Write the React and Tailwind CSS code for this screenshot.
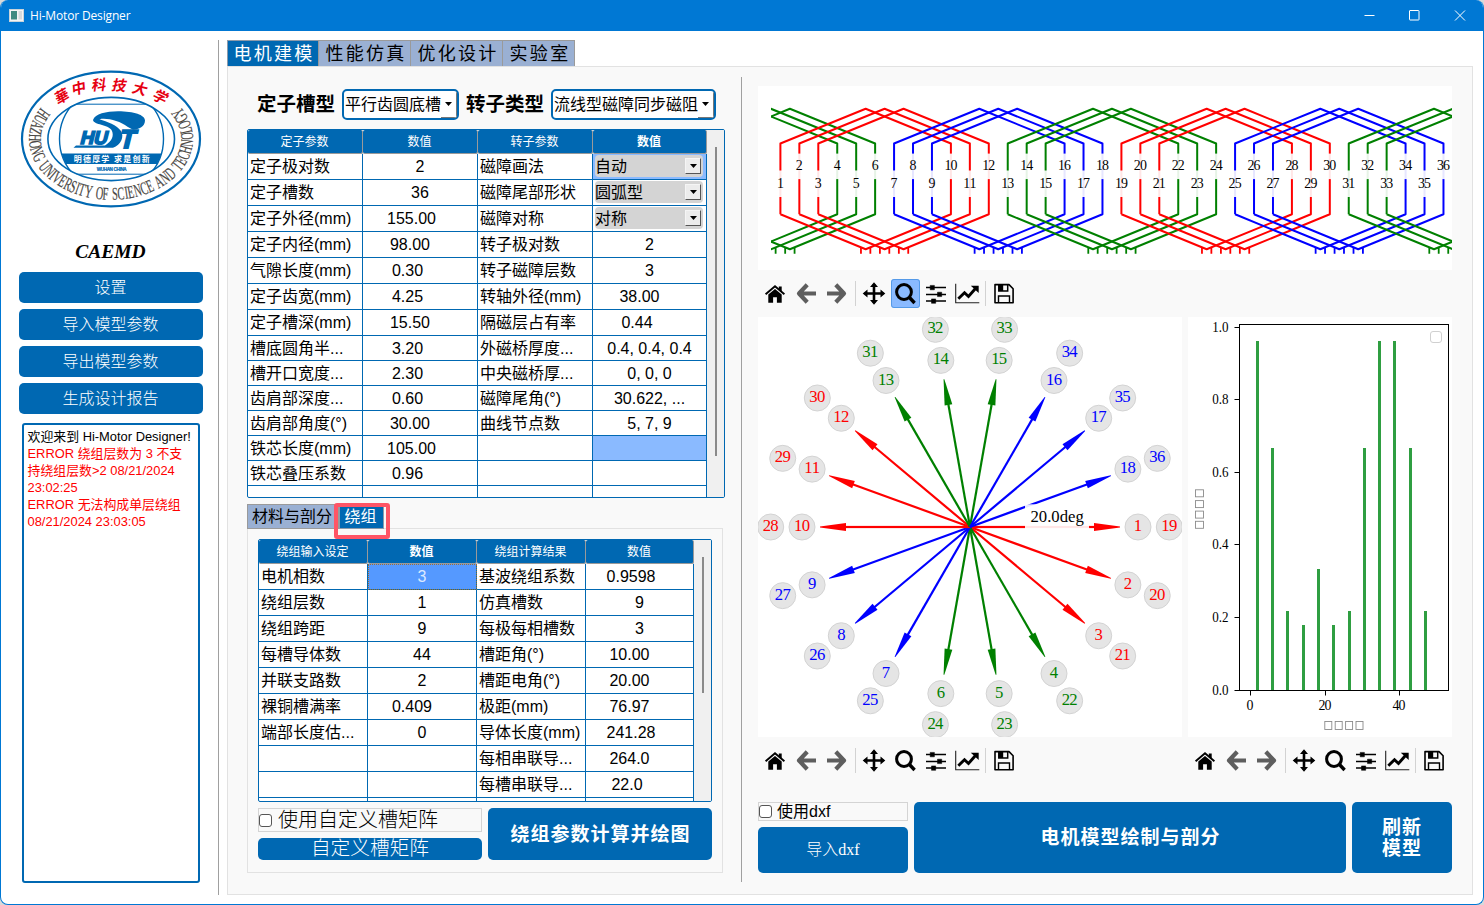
import React from "react";

const SANS = "font-['Liberation_Sans','Noto_Sans_CJK_SC',sans-serif]";
const SERIF = "font-['Liberation_Serif','Noto_Sans_CJK_SC',serif]";

/* ---------- Emblem ---------- */

const NARROW = { I: 0.5, " ": 0.55, J: 0.6, F: 0.85, L: 0.85, E: 0.9, S: 0.8, U: 1.05, N: 1.08, O: 1.05, G: 1.08, A: 1.02, H: 1.08, D: 1.05 };

function ringLetters() {
  const text = "HUAZHONG UNIVERSITY OF SCIENCE AND TECHNOLOGY";
  const cx = 111, cy = 138.5, rx = 82, ry = 60.8;
  const pts = [];
  let total = 0;
  let prev = null;
  for (let i = 0; i <= 600; i++) {
    const t = ((212 - (244 * i) / 600) * Math.PI) / 180;
    const x = cx + rx * Math.cos(t);
    const y = cy + ry * Math.sin(t);
    if (prev) total += Math.hypot(x - prev.x, y - prev.y);
    const p = { x, y, s: total, a: (Math.atan2(-ry * Math.cos(t), rx * Math.sin(t)) * 180) / Math.PI };
    pts.push(p);
    prev = p;
  }
  const ws = [...text].map((c) => NARROW[c] || 1);
  const sum = ws.reduce((a, b) => a + b, 0);
  let acc = 0;
  return [...text].map((c, i) => {
    const s = ((acc + ws[i] / 2) / sum) * total;
    acc += ws[i];
    const p = pts.find((q) => q.s >= s) || pts[pts.length - 1];
    return { c, x: p.x, y: p.y, a: p.a };
  });
}

function Emblem() {
  const top = [
    ["華", 62, 96, -30], ["中", 79, 88, -14], ["科", 99, 84.5, -3],
    ["技", 119.5, 85, 4], ["大", 140, 88.5, 14], ["学", 160.5, 96.5, 26],
  ];
  return (
    <svg className="block h-[138px] w-[182px]" viewBox="20 69.5 182 138">
      <defs>
        <clipPath id="em-oval"><ellipse cx="111" cy="138.5" rx="64" ry="42" /></clipPath>
        <clipPath id="em-round"><circle cx="111.5" cy="138.5" r="52" /></clipPath>
      </defs>
      <ellipse cx="111" cy="138.5" rx="89" ry="67.3" fill="#fff" stroke="#0068b2" strokeWidth="2.2" />
      <ellipse cx="111.2" cy="138.5" rx="63.3" ry="41.6" fill="none" stroke="#0068b2" strokeWidth="1.6" />
      <g clipPath="url(#em-oval)">
        <circle cx="111.5" cy="138.5" r="52" fill="none" stroke="#0068b2" strokeWidth="1.4" />
        <g clipPath="url(#em-round)">
          <path d="M50 103.7H170M50 173.7H170" stroke="#0068b2" strokeWidth="1" />
          <rect x="50" y="153" width="120" height="10.5" fill="#0068b2" />
        </g>
      </g>
      <g fill="#e60012" fontSize="14.5" fontWeight="700" textAnchor="middle" className={SERIF}>
        {top.map(([c, x, y, r]) => (
          <text key={c} x="0" y="5" transform={`translate(${x} ${y}) rotate(${r}) skewX(-10)`}>{c}</text>
        ))}
      </g>
      <g fill="#4a4744" fontSize="18" textAnchor="middle" stroke="#4a4744" strokeWidth="0.2" className={SERIF}>
        {ringLetters().map((l, i) => (
          <text key={i} transform={`translate(${l.x} ${l.y}) rotate(${l.a}) scale(0.57 1)`}>{l.c}</text>
        ))}
      </g>
      <g fill="#0068b2">
        <path d="M93 119.500C95 113.500 106 110.800 118 110.800C134 110.800 145 114.500 145 120C145 126 139 129 133 129.300L127.500 126.200C120 120.500 107 117 99.500 118.700C107 121 117 124.500 121 130.500C124.500 136 121 144.500 113 147.300L73.500 147.300L76 144.900L105 144.900C112 141 114.500 135 111.500 129.500C108 124 94 124.500 93 119.500Z" />
        <text x="0" y="0" transform="translate(79.500 143.500) skewX(-14) scale(1.020 1)" fontSize="18.500" fontWeight="700" stroke="#0068b2" strokeWidth="1.600" className={SANS}>HU</text>
        <text x="0" y="0" transform="translate(118 147) skewX(-14) scale(1 1)" fontSize="26" fontWeight="700" stroke="#0068b2" strokeWidth="1.800" className={SANS}>T</text>
      </g>
      <text x="111.700" y="161.200" fontSize="8" fontWeight="700" fill="#fff" textAnchor="middle" textLength="76" className={SANS}>明德厚学 求是创新</text>
      <text x="111.700" y="170" fontSize="4.600" fontWeight="700" fill="#0068b2" stroke="#0068b2" strokeWidth="0.200" textAnchor="middle" textLength="30" className={SANS}>WUHAN CHINA</text>
    </svg>
  );
}

/* ---------- Plot toolbar ---------- */

function Tool({ active, children }) {
  return (
    <div className={active ? "h-[29px] w-[30px] pl-px" : "h-[29px] w-[30px]"}>
      <div className={active ? "h-[29px] w-[29px] rounded-[3px] bg-[#8abaff] outline outline-1 -outline-offset-1 outline-[#559ae8]" : "h-[29px] w-[30px]"}>
        <svg className={active ? "-ml-px block h-[29px] w-[30px]" : "block h-[29px] w-[30px]"} viewBox="0 0 30 29">{children}</svg>
      </div>
    </div>
  );
}

const Sep = () => <div className="mx-[2px] h-[25px] w-px bg-[#d2d2d2]" />;

function Toolbar({ zoomOn }) {
  return (
    <div className="flex h-[31px] items-center gap-px pl-[2px]">
      <Tool>
        <path d="M8.3 15.5L15 10L21.7 15.5V23.8H16.9V18.2H13.1V23.8H8.3Z" />
        <path d="M5.6 15.2L15 7.3L24.4 15.2" fill="none" stroke="#000" strokeWidth="1.9" />
        <path d="M18.8 7.4H21.7V13L18.8 10.6Z" />
      </Tool>
      <Tool>
        <path d="M16.2 5.8L8 14.5L16.2 23.2M8.5 14.5H25" fill="none" stroke="#5e5e5e" strokeWidth="4.2" strokeLinejoin="round" />
      </Tool>
      <Tool>
        <path d="M13.8 5.8L22 14.5L13.8 23.2M21.5 14.5H5" fill="none" stroke="#5e5e5e" strokeWidth="4.2" strokeLinejoin="round" />
      </Tool>
      <Sep />
      <Tool>
        <path d="M15 5V24M5.5 14.5H24.5" stroke="#000" strokeWidth="2.6" />
        <path d="M15 3.2L19 8H11ZM15 25.8L19 21H11ZM3.7 14.5L8.5 10.5V18.5ZM26.3 14.5L21.5 10.5V18.5Z" />
      </Tool>
      <Tool active={zoomOn}>
        <circle cx="14" cy="13" r="7.4" fill="none" stroke="#000" strokeWidth="3" />
        <path d="M19 18L24.6 24" stroke="#000" strokeWidth="3.4" />
      </Tool>
      <Tool>
        <path d="M5 8.6H25M5 15.4H25M5 22.1H25" stroke="#000" strokeWidth="1.5" />
        <path d="M9.2 6.4H13.4V10.8H9.2ZM16.5 13.2H20.7V17.6H16.5ZM10.5 19.9H14.7V24.3H10.5Z" stroke="#000" strokeWidth="0.5" />
      </Tool>
      <Tool>
        <path d="M3.7 4.8V23.8H27.3" fill="none" stroke="#222" strokeWidth="1.1" />
        <path d="M6.3 19.7L12.5 13.7L16.5 17.5L23.5 9.5" fill="none" stroke="#000" strokeWidth="2.9" />
        <path d="M18.8 6.8H26.7V14Z" />
      </Tool>
      <Sep />
      <Tool>
        <path d="M6 5.6H20L24.1 9.7V23.7H6Z" fill="none" stroke="#000" strokeWidth="1.6" strokeLinejoin="round" />
        <path d="M9.8 5.6V12.1H18.7V5.6" fill="none" stroke="#000" strokeWidth="1.5" />
        <path d="M9.8 5H14.2V12H9.8Z" />
        <path d="M9.5 23.5V17H20.5V23.5" fill="none" stroke="#000" strokeWidth="1.4" />
      </Tool>
    </div>
  );
}

/* ---------- Plots ---------- */

const R = "#ff0000", G = "#008000", B = "#0000ff";
const phaseColor = (k) => [R, G, B, R, G, B][Math.floor(((k - 1) % 18) / 3)];

function WindingPlot() {
  const sx = (k) => 780.4 + (k - 1) * 18.945;
  const coils = [];
  [[-5, G], [1, R], [7, B], [13, G], [19, R], [25, B], [31, G]].forEach(([s, c]) => {
    for (let i = 0; i < 3; i++) coils.push([s + i, c]);
  });
  return (
    <svg className="block h-[184px] w-[694px] bg-white" viewBox="758 86 694 184">
      <defs><clipPath id="wind"><rect x="771" y="86" width="681" height="184" /></clipPath></defs>
      <g clipPath="url(#wind)" fill="none" strokeWidth="2">
        {coils.map(([s, c]) => {
          const a = sx(s), b = sx(s + 9), m = (a + b) / 2;
          return (
            <g key={s} stroke={c}>
              <path d={`M${a} 214.300V143.500L${m} 108.800L${b} 143.500V214.300L${m} 249.300L${a} 214.300`} strokeLinejoin="round" />
              <path d={`M${m - 4.7} 247.500V253.800M${m + 4.7} 247.500V253.800`} strokeWidth="1.8" />
            </g>
          );
        })}
      </g>
      <g fontSize="13.9" textAnchor="middle" className={SERIF}>
        {Array.from({ length: 36 }, (_, i) => {
          const k = i + 1, odd = k % 2 === 1;
          return (
            <g key={k}>
              <rect x={sx(k) - 6} y={odd ? 170.5 : 153.6} width="12" height={odd ? 26.5 : 25.5} fill="#fff" fillOpacity="0.9" />
              <text x={sx(k)} y={odd ? 188 : 170} textLength={k > 9 ? 13 : undefined}>{k}</text>
            </g>
          );
        })}
      </g>
    </svg>
  );
}

function StarPlot() {
  const cx = 970, cy = 527;
  const at = (k, r) => {
    const t = ((k - 1) * 20 * Math.PI) / 180;
    return [cx + r * Math.cos(t), cy + r * 1.007 * Math.sin(t)];
  };
  const slots = Array.from({ length: 36 }, (_, i) => i + 1);
  return (
    <svg className="block h-[420px] w-[424px] bg-white" viewBox="758 317 424 420">
      {slots.slice(0, 18).map((k) => (
        <g key={k} transform={`translate(${cx} ${cy}) rotate(${(k - 1) * 20})`} fill={phaseColor(k)}>
          <rect x="0" y="-1.1" width="128" height="2.2" />
          <path d="M124 -3.9V3.9L150 0.4V-0.4Z" />
        </g>
      ))}
      <rect x="1025" y="504.3" width="64" height="26" fill="#fff" fillOpacity="0.9" />
      <g fontSize="16.7" className={SERIF}>
        <text x="1030.5" y="521.7">20.0deg</text>
        {slots.map((k) => {
          const [x, y] = at(k, k > 18 ? 199.3 : 168);
          return (
            <g key={k}>
              <circle cx={x} cy={y} r="13" fill="#e5e5e5" stroke="#d3d3d3" strokeWidth="1" />
              <text x={x} y={y + 4.1} textAnchor="middle" fill={phaseColor(k)} textLength={k > 9 ? 16 : undefined}>{k}</text>
            </g>
          );
        })}
      </g>
    </svg>
  );
}

const BARS = [
  [1256, 341], [1271, 448], [1286, 611], [1302, 625], [1317, 569], [1332, 625],
  [1348, 611], [1363, 448], [1378, 341], [1393, 341], [1409, 448], [1424, 611],
];

function BarPlot() {
  return (
    <svg className="block h-[420px] w-[264px] bg-white" viewBox="1188 317 264 420">
      {BARS.map(([x, y]) => <rect key={x} x={x} y={y} width="3" height={690 - y} fill="#2f9e41" />)}
      <rect x="1239.5" y="324.5" width="209" height="366" fill="none" stroke="#000" />
      <g fontSize="13.9" className={SERIF}>
        {[["1.0", 327.5], ["0.8", 399.5], ["0.6", 472.5], ["0.4", 544.5], ["0.2", 617.5], ["0.0", 690.5]].map(([t, y]) => (
          <g key={t}>
            <path d={`M1234.500 ${y}H1240`} stroke="#000" />
            <text x="1228.5" y={y + 4.3} textAnchor="end" textLength="16.3" lengthAdjust="spacingAndGlyphs">{t}</text>
          </g>
        ))}
        {[["0", 1250.5], ["20", 1325.5], ["40", 1399.5]].map(([t, x]) => (
          <g key={t}>
            <path d={`M${x} 690V695.500`} stroke="#000" />
            <text x={x - 0.5} y="710" textAnchor="middle" textLength={t.length > 1 ? 13 : undefined}>{t}</text>
          </g>
        ))}
      </g>
      <rect x="1430.5" y="331.5" width="11" height="11" rx="2.5" fill="#fff" stroke="#d0d0d0" />
      <g fill="none" strokeWidth="0.9" stroke="#8a8a8a">
        {[489.8, 500.6, 511.1, 521.3].map((y) => <rect key={y} x="1195.5" y={y} width="8" height="7" />)}
        {[1324.8, 1335.2, 1345.6, 1356].map((x) => <rect key={x} x={x} y="721.5" width="7" height="8" />)}
      </g>
    </svg>
  );
}

/* ---------- Tables ---------- */

const trailing = { 4: "pr-[25px]", 5: "pr-[20px]", 6: "pr-[17px]" };

function valueClass(v) {
  if (/^\d+\.\d+$/.test(v)) return trailing[v.length] || "";
  return "";
}

function Head({ cols, bold }) {
  return cols.map((c, i) => (
    <div
      key={i}
      className={`flex h-6 items-center justify-center rounded-[2px] border-r border-b border-[#9a9a9a] bg-[#0068b2] pt-px pr-px text-[12px] leading-none text-white ${i === bold ? "font-bold" : "font-normal"}`}
    >
      {c}
    </div>
  ));
}

function CellCombo({ text, selected }) {
  return (
    <div className={`h-full w-full py-px pr-[3px] pl-[2px] ${selected ? "bg-[#8abaff]" : ""}`}>
      <div className="flex h-[22px] items-center justify-between rounded-[4px] bg-[#d4d4d4] pr-[2px]">
        <span>{text}</span>
        <span className="flex h-4 w-4 items-center justify-center border border-t-[#f5f5f5] border-r-[#555] border-b-[#555] border-l-[#f5f5f5] bg-[#ececec]">
          <svg className="h-[4px] w-[7px]" viewBox="0 0 7 4"><path d="M0 0H7L3.5 4Z" /></svg>
        </span>
      </div>
    </div>
  );
}

function Cell({ children, kind, short }) {
  const h = short ? "h-[25px]" : "h-[26px]";
  const base = `${h} overflow-hidden whitespace-nowrap border-r border-b border-[#0068b2] text-[16px] leading-[25px]`;
  if (kind === "label") return <div className={`${base} pl-[2px]`}>{children}</div>;
  if (kind === "combo") return <div className={base}>{children}</div>;
  if (kind === "marked") return <div className={`${base} bg-[#8abaff]`} />;
  if (kind === "current")
    return <div className={`${base} bg-[#5599ff] text-center text-[#dbe9ff] outline outline-1 -outline-offset-1 outline-dotted outline-[#a07030]`}>{children}</div>;
  return <div className={`${base} text-center ${valueClass(String(children || ""))}`}>{children}</div>;
}

const T1 = [
  ["定子极对数", "2", "磁障画法", { combo: "自动", selected: true }],
  ["定子槽数", "36", "磁障尾部形状", { combo: "圆弧型" }],
  ["定子外径(mm)", "155.00", "磁障对称", { combo: "对称" }],
  ["定子内径(mm)", "98.00", "转子极对数", "2"],
  ["气隙长度(mm)", "0.30", "转子磁障层数", "3"],
  ["定子齿宽(mm)", "4.25", "转轴外径(mm)", "38.00"],
  ["定子槽深(mm)", "15.50", "隔磁层占有率", "0.44"],
  ["槽底圆角半...", "3.20", "外磁桥厚度...", "0.4, 0.4, 0.4"],
  ["槽开口宽度...", "2.30", "中央磁桥厚...", "0, 0, 0"],
  ["齿肩部深度...", "0.60", "磁障尾角(°)", "30.622, ..."],
  ["齿肩部角度(°)", "30.00", "曲线节点数", "5, 7, 9"],
  ["铁芯长度(mm)", "105.00", "", { marked: true }],
  ["铁芯叠压系数", "0.96", "", ""],
];

const T2 = [
  ["电机相数", { current: "3" }, "基波绕组系数", "0.9598"],
  ["绕组层数", "1", "仿真槽数", "9"],
  ["绕组跨距", "9", "每极每相槽数", "3"],
  ["每槽导体数", "44", "槽距角(°)", "10.00"],
  ["并联支路数", "2", "槽距电角(°)", "20.00"],
  ["裸铜槽满率", "0.409", "极距(mm)", "76.97"],
  ["端部长度估...", "0", "导体长度(mm)", "241.28"],
  ["", "", "每相串联导...", "264.0"],
  ["", "", "每槽串联导...", "22.0"],
];

function Rows({ data, shortFrom }) {
  return data.map((row, r) =>
    row.map((v, c) => {
      const key = `${r}-${c}`;
      const short = r >= shortFrom;
      if (c % 2 === 0) return <Cell key={key} kind="label" short={short}>{v}</Cell>;
      if (v && v.combo) return <Cell key={key} kind="combo" short={short}><CellCombo text={v.combo} selected={v.selected} /></Cell>;
      if (v && v.marked) return <Cell key={key} kind="marked" short={short} />;
      if (v && v.current) return <Cell key={key} kind="current" short={short}>{v.current}</Cell>;
      return <Cell key={key} short={short}>{v}</Cell>;
    })
  );
}

function Tail() {
  return [0, 1, 2, 3].map((i) => <div key={i} className="border-r border-[#0068b2]" />);
}

/* ---------- Controls ---------- */

function Combo({ text, className }) {
  return (
    <div className={`flex h-[31px] items-center justify-between overflow-hidden rounded-[5px] border-2 border-[#0068b2] bg-white pl-px ${className}`}>
      <span className="w-0 flex-1 text-[16px] leading-none font-normal whitespace-nowrap">{text}</span>
      <span className="flex h-[27px] w-4 shrink-0 items-center justify-center border-r border-b border-[#777]">
        <svg className="h-[4px] w-[7px]" viewBox="0 0 7 4"><path d="M0 0H7L3.5 4Z" /></svg>
      </span>
    </div>
  );
}

function Tab({ on, className, children }) {
  return (
    <div className={`flex items-center justify-center border whitespace-nowrap ${on ? "border-[#8d9bab] bg-[#0068b2] text-white" : "border-[#9a9a9a] bg-[#9ab0d3] text-black"} ${className}`}>
      {children}
    </div>
  );
}

function Button({ className, children }) {
  return <div className={`flex items-center justify-center rounded-[5px] bg-[#0068b2] text-center whitespace-nowrap text-white ${className}`}>{children}</div>;
}

const Check = () => <span className="h-[13px] w-[13px] shrink-0 rounded-[3px] border border-[#555] bg-white" />;

/* ---------- Window ---------- */

export default function App() {
  return (
    <div className="h-[905px] w-[1484px] overflow-hidden bg-[#d9d9d9]">
      <div className={`flex h-[905px] w-[1484px] flex-col overflow-hidden rounded-[8px] border border-t-0 border-[#0078d4] bg-white text-black ${SANS}`}>
        <div className="flex h-[31px] shrink-0 items-center bg-[#0078d4] pl-2 text-white">
          <svg className="h-[13px] w-[15px]" viewBox="0 0 15 13">
            <rect x="0.5" y="0.5" width="14" height="12" fill="#f4f4f4" stroke="#c9d3da" />
            <rect x="2" y="2" width="6" height="8.5" fill="#3f8a80" />
            <rect x="9.5" y="2" width="3.5" height="8.5" fill="#d5d9dc" />
          </svg>
          <span className="ml-[6px] flex-1 font-['Open_Sans','Noto_Sans',sans-serif] text-[12px] leading-none tracking-[-0.15px]">Hi-Motor Designer</span>
          <svg className="mr-[17px] h-[11px] w-[102px]" viewBox="0 0 102 11" fill="none" stroke="#fff">
            <path d="M0.5 5.5H10.5" />
            <rect x="45.5" y="0.5" width="9.5" height="9.5" rx="0.5" />
            <path d="M91 0.500L101 10.500M101 0.500L91 10.500" strokeWidth="1" />
          </svg>
        </div>

        <div className="flex min-h-0 flex-1">
          {/* Side bar */}
          <div className="flex w-[217px] shrink-0 flex-col items-center pt-[38.5px] pl-[2px]">
            <div className="flex w-[184px] flex-col items-center"><Emblem /></div>
            <div className={`mt-[29px] flex h-[30px] items-center text-[19.5px] leading-none font-bold italic ${SERIF}`}>CAEMD</div>
            <div className="mt-[5.5px] flex w-[184px] flex-col gap-[6px]">
              {["设置", "导入模型参数", "导出模型参数", "生成设计报告"].map((t) => (
                <Button key={t} className="h-[31px] text-[16px] leading-none font-light">{t}</Button>
              ))}
            </div>
            <div className="mt-[9px] h-[460px] w-[178px] rounded-[3px] border-2 border-[#0068b2] px-1 pt-[3px] text-[12.9px] leading-[17px] whitespace-nowrap text-[#ff0000]">
              <p className="text-black">欢迎来到 Hi-Motor Designer!</p>
              <p>ERROR 绕组层数为 3 不支</p>
              <p>持绕组层数&gt;2 08/21/2024</p>
              <p>23:02:25</p>
              <p>ERROR 无法构成单层绕组</p>
              <p>08/21/2024 23:03:05</p>
            </div>
          </div>
          <div className="mt-[9px] h-[855px] w-px shrink-0 bg-[#a0a0a0]" />

          {/* Main area */}
          <div className="ml-2 flex w-[1246px] shrink-0 flex-col pt-[9px]">
            <div className="flex h-[26px]">
              {[["电机建模", "w-[92px] pl-[2px]"], ["性能仿真", "w-[93px] -ml-px pl-[3px]"], ["优化设计", "w-[93px] -ml-px pl-[3px]"], ["实验室", "w-[73px] -ml-px pl-[3px]"]].map(([t, w], i) => (
                <Tab key={t} on={i === 0} className={`h-[27px] text-[18px] leading-none font-normal tracking-[2.3px] ${w}`}>{t}</Tab>
              ))}
            </div>
            <div className="flex h-[829px] border border-[#e2e2e2] bg-[#f9f9f9] pl-[19px]">
              {/* Parameters */}
              <div className="flex w-[478px] shrink-0 flex-col pt-[22px]">
                <div className="flex h-[31px] items-center pl-[10px] text-[19.5px] font-bold">
                  <span className="w-[85px] leading-none">定子槽型</span>
                  <Combo text="平行齿圆底槽" className="w-[117px]" />
                  <span className="ml-[7px] w-[85px] leading-none">转子类型</span>
                  <Combo text="流线型磁障同步磁阻" className="w-[165px]" />
                </div>

                <div className="mt-[9px] flex h-[369px] w-[478px] overflow-hidden rounded-[2px] border border-[#0068b2] bg-white">
                  <div className="grid w-[459px] grid-cols-[115px_115px_115px_114px] grid-rows-[24px_repeat(7,26px)_repeat(6,25px)_11px]">
                    <Head cols={["定子参数", "数值", "转子参数", "数值"]} bold={3} />
                    <Rows data={T1} shortFrom={7} />
                    <Tail />
                  </div>
                  <div className="w-[17px] bg-[#f0f0f0] pt-[17px] pl-2"><div className="h-[309px] w-[2px] bg-[#8a8a8a]" /></div>
                </div>

                <div className="relative mt-[6px] flex h-[24px] w-[476px]">
                  <Tab className="h-[25px] w-[92px] pr-[2px] text-[16px] leading-none">材料与剖分</Tab>
                  <Tab on className="h-[25px] w-[45px] pr-[2px] text-[16px] leading-none">绕组</Tab>
                  <div className="absolute -top-px left-[87px] z-10 h-[36px] w-[56px] rounded-[3px] border-4 border-[#ff5566]" />
                </div>
                <div className="h-[345px] w-[476px] border border-[#e2e2e2] p-[10px]">
                  <div className="flex h-[263px] w-[454px] overflow-hidden rounded-[2px] border border-[#0068b2] bg-white">
                    <div className="grid w-[435px] grid-cols-[109px_109px_109px_108px] grid-rows-[24px_repeat(9,26px)_3px]">
                      <Head cols={["绕组输入设定", "数值", "绕组计算结果", "数值"]} bold={1} />
                      <Rows data={T2} shortFrom={99} />
                      <Tail />
                    </div>
                    <div className="w-[17px] bg-[#f0f0f0] pt-[17px] pl-2"><div className="h-[136px] w-[2px] bg-[#8a8a8a]" /></div>
                  </div>
                  <div className="mt-[6px] flex gap-[6px]">
                    <div className="flex w-[224px] flex-col gap-[6px]">
                      <div className="flex h-6 items-center gap-[6px] border border-[#d4d4d4] text-[20px] leading-none font-light"><Check />使用自定义槽矩阵</div>
                      <Button className="h-[22px] text-[19.7px] leading-none font-light">自定义槽矩阵</Button>
                    </div>
                    <Button className="h-[52px] w-[224px] pl-px text-[19px] leading-none font-bold tracking-[1px]">绕组参数计算并绘图</Button>
                  </div>
                </div>
              </div>

              <div className="mt-[10px] ml-4 h-[805px] w-px shrink-0 bg-[#a0a0a0]" />

              {/* Plots */}
              <div className="ml-4 flex w-[694px] shrink-0 flex-col pt-[19px]">
                <WindingPlot />
                <div className="my-2"><Toolbar zoomOn /></div>
                <div className="flex gap-[6px]">
                  <div className="flex flex-col gap-2"><StarPlot /><Toolbar /></div>
                  <div className="flex flex-col gap-2"><BarPlot /><Toolbar /></div>
                </div>
                <div className="mt-[26px] flex h-[71px] gap-[6px]">
                  <div className="flex w-[150px] flex-col gap-[6px]">
                    <div className="flex h-[19px] items-center gap-[5px] border border-[#d4d4d4] text-[16px] leading-none"><Check /><span>使用dxf</span></div>
                    <Button className={`h-[46px] text-[16px] leading-none font-light ${SERIF}`}>导入dxf</Button>
                  </div>
                  <Button className="w-[432px] pl-px text-[19px] leading-none font-bold tracking-[1px]">电机模型绘制与剖分</Button>
                  <Button className="w-[100px] text-[19px] leading-[21px] font-bold tracking-[1px]">刷新<br />模型</Button>
                </div>
              </div>
            </div>
          </div>
        </div>
      </div>
    </div>
  );
}
